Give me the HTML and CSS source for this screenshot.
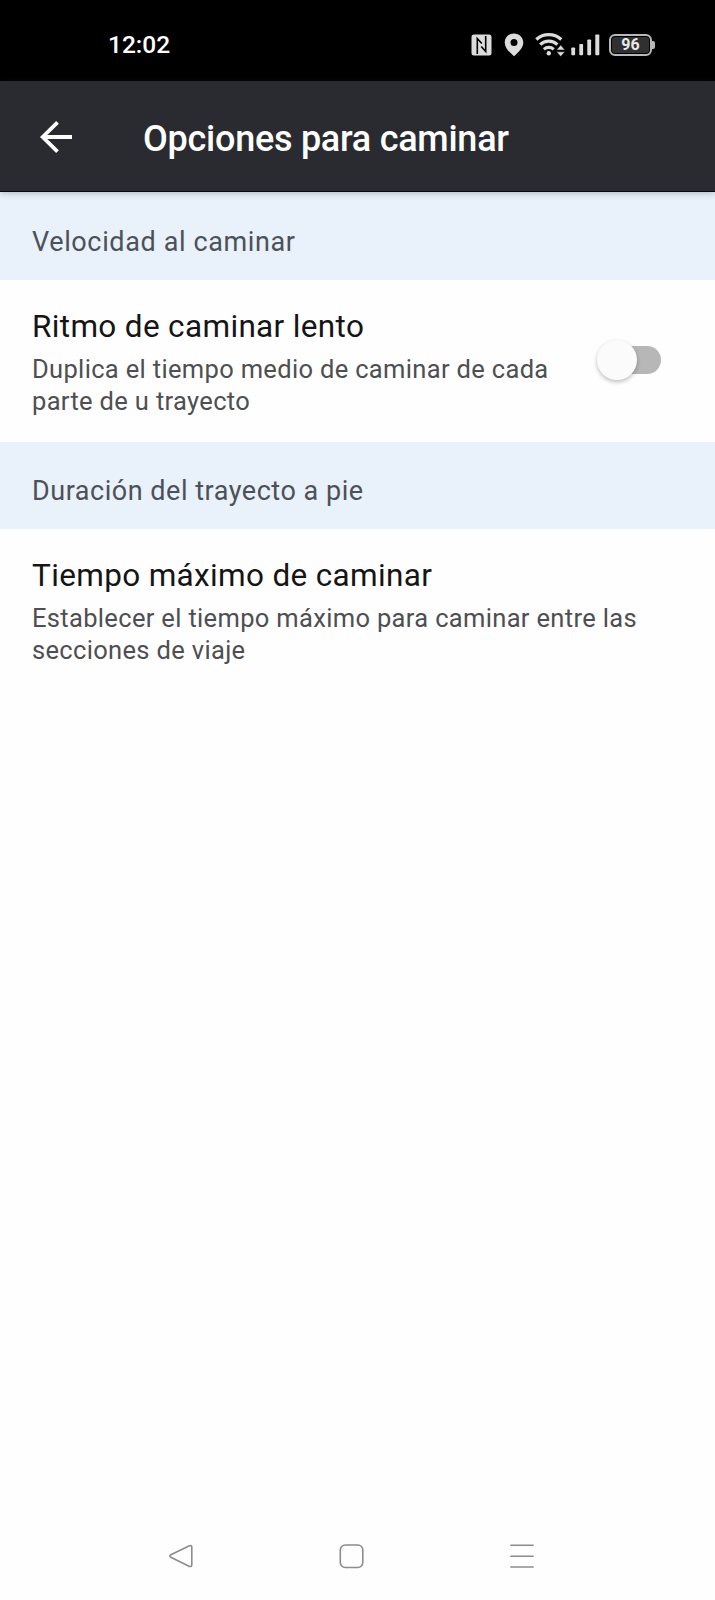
FILE: index.html
```html
<!DOCTYPE html>
<html lang="es">
<head>
  <meta charset="UTF-8" />
  <meta name="viewport" content="width=device-width, initial-scale=1.0"/>
  <title>Opciones para caminar</title>
  <link rel="stylesheet" href="styles.css">
</head>
<body>
  <div class="status-bar">
    <span class="clock">12:02</span>
    <div class="status-icons">
      <!-- NFC -->
      <svg class="nfc" width="21" height="22" viewBox="0 0 21 22">
        <rect x="0.5" y="0.5" width="20" height="21" rx="2.5" fill="#dcdcdc"/>
        <path d="M6.300 20V4.500L10.800 9.500" fill="none" stroke="#000" stroke-width="1.600"/>
        <path d="M14.700 2V17.500L10.200 12.500" fill="none" stroke="#000" stroke-width="1.600"/>
      </svg>
      <!-- ubicación -->
      <svg class="pin" width="20" height="24" viewBox="0 0 20 24">
        <path fill="#dcdcdc" fill-rule="evenodd" d="M10 0.500C4.600 0.500 0.700 4.500 0.700 9.500C0.700 15.500 7 20.500 10 23.300C13 20.500 19.300 15.500 19.300 9.500C19.300 4.500 15.400 0.500 10 0.500ZM10 5.900A3.500 3.500 0 1 1 10 12.900A3.500 3.500 0 1 1 10 5.900Z"/>
      </svg>
      <!-- wifi -->
      <svg class="wifi" width="30" height="24" viewBox="0 0 30 24">
        <g fill="none" stroke="#dcdcdc" stroke-width="3.200">
          <path d="M1.300 6.500A18.500 18.500 0 0 1 26.300 6.500"/>
          <path d="M5.200 11.600A12.500 12.500 0 0 1 22.400 11.600"/>
          <path d="M8.900 16.300A7.200 7.200 0 0 1 18.700 16.300"/>
        </g>
        <circle cx="13.800" cy="20.300" r="2.200" fill="#dcdcdc"/>
        <path d="M25.700 12L30 17H21.500ZM21.500 18.800H30L25.700 23.500Z" fill="#dcdcdc" stroke="#000" stroke-width="0.500"/>
      </svg>
      <!-- señal -->
      <svg class="signal" width="29" height="22" viewBox="0 0 29 22" fill="#dcdcdc">
        <rect x="0.300" y="13.500" width="3.800" height="7.700" rx="0.800"/>
        <rect x="8.300" y="10" width="3.800" height="11.200" rx="0.800"/>
        <rect x="16.300" y="5.500" width="3.800" height="15.700" rx="0.800"/>
        <rect x="24.300" y="0.500" width="4" height="20.700" rx="0.800"/>
      </svg>
      <div class="battery"><span>96</span></div>
    </div>
  </div>

  <header class="app-bar">
    <svg class="back" width="34" height="32" viewBox="0 0 34 32" fill="none" stroke="#fff" stroke-width="3.800">
      <path d="M33 16H3M18.500 1.400L3.700 16L18.500 30.600"/>
    </svg>
    <h1>Opciones para caminar</h1>
  </header>

  <main>
    <h2 class="section speed">Velocidad al caminar</h2>
    <div class="row">
      <div class="row-text">
        <h3>Ritmo de caminar lento</h3>
        <p>Duplica el tiempo medio de caminar de cada<br>parte de u trayecto</p>
      </div>
      <div class="switch"><div class="thumb"></div></div>
    </div>
    <h2 class="section">Duración del trayecto a pie</h2>
    <div class="row">
      <div class="row-text">
        <h3>Tiempo máximo de caminar</h3>
        <p>Establecer el tiempo máximo para caminar entre las<br>secciones de viaje</p>
      </div>
    </div>
  </main>

  <nav class="nav-bar">
    <svg width="26" height="26" viewBox="0 0 26 26">
      <path d="M21.500 2.700L2.800 11.800Q0.800 13 2.800 14.200L21.500 23.400Q23.800 24 23.800 21.700V4.300Q23.800 2 21.500 2.700Z"/>
    </svg>
    <svg width="26" height="26" viewBox="0 0 26 26">
      <rect x="1.300" y="2" width="22.500" height="22.500" rx="5"/>
    </svg>
    <svg width="26" height="26" viewBox="0 0 26 26">
      <path d="M1.300 2.300H24.700M1.300 13.200H24.700M1.300 24H24.700"/>
    </svg>
  </nav>
</body>
</html>
```
FILE: styles.css
```css
body {
  margin: 0;
  min-height: 1600px;
  display: flex;
  flex-direction: column;
  font-family: Roboto, sans-serif;
  background-color: #fefefe;
}

h1, h2, h3, p {
  margin: 0;
  font-weight: 400;
  white-space: nowrap;
}

.status-bar {
  box-sizing: border-box;
  height: 81px;
  padding: 0 63px 0 108px;
  display: flex;
  justify-content: space-between;
  background-color: #000;
}

.clock {
  margin-top: 31px;
  font-size: 24.5px;
  line-height: 28px;
  font-weight: 500;
  color: #fff;
}

.status-icons {
  display: flex;
  align-items: flex-start;
  padding-top: 33px;
}

.nfc {
  margin: 1px 12px 0 0;
}

.pin {
  margin-right: 11px;
}

.wifi {
  margin-right: 6px;
}

.signal {
  margin: 1px 9px 0 0;
}

.battery {
  position: relative;
  box-sizing: border-box;
  width: 43px;
  height: 22px;
  margin-top: 1px;
  border: 2px solid #b8b8b8;
  border-radius: 6px;
  background-color: #303030;
  box-shadow: inset 0 0 0 1px #000;
  color: #e8e8e8;
  font-size: 16px;
  font-weight: 700;
  line-height: 18px;
  text-align: center;
}

.battery::after {
  content: "";
  position: absolute;
  right: -5px;
  top: 5px;
  width: 3px;
  height: 8px;
  border-radius: 0 2px 2px 0;
  background-color: #b8b8b8;
}

.app-bar {
  position: relative;
  box-sizing: border-box;
  height: 111px;
  padding: 1px 39px 0;
  display: flex;
  align-items: center;
  background-color: #2a2b30;
  border-bottom: 1px solid #09090f;
  box-shadow: 0 1px 7px rgba(40, 40, 60, 0.3);
}

.back {
  margin-right: 70px;
}

.app-bar h1 {
  padding-top: 4px;
  font-size: 36px;
  line-height: 44px;
  font-weight: 500;
  letter-spacing: -0.26px;
  color: #fff;
}

.section {
  box-sizing: border-box;
  height: 87px;
  padding: 33px 32px 0;
  background-color: #e9f1fa;
  color: #4c5159;
  font-size: 27px;
  line-height: 32px;
  letter-spacing: 0.52px;
}

.speed {
  height: 88px;
  padding-top: 34px;
  letter-spacing: 0.62px;
}

.row {
  box-sizing: border-box;
  height: 162px;
  padding: 29px 54px 0 32px;
  display: flex;
  justify-content: space-between;
}

.row h3 {
  font-size: 31.5px;
  line-height: 36px;
  letter-spacing: 0.34px;
  color: #151515;
}

.row p {
  margin-top: 8px;
  font-size: 25.5px;
  line-height: 32px;
  letter-spacing: 0.33px;
  color: #4e4f52;
}

.switch {
  position: relative;
  width: 57px;
  height: 28px;
  margin-top: 37px;
  border-radius: 14px;
  background-color: #b7b7b8;
}

.thumb {
  position: absolute;
  left: -7px;
  top: -6px;
  width: 40px;
  height: 40px;
  border-radius: 50%;
  background-color: #fbfbfb;
  box-shadow: 0 2px 4px rgba(0, 0, 0, 0.25);
}

.nav-bar {
  margin-top: auto;
  height: 57px;
  padding: 0 180px 0 168px;
  display: flex;
  justify-content: space-between;
}

.nav-bar svg {
  fill: none;
  stroke: #8c8c8c;
  stroke-width: 1.6;
}
```
